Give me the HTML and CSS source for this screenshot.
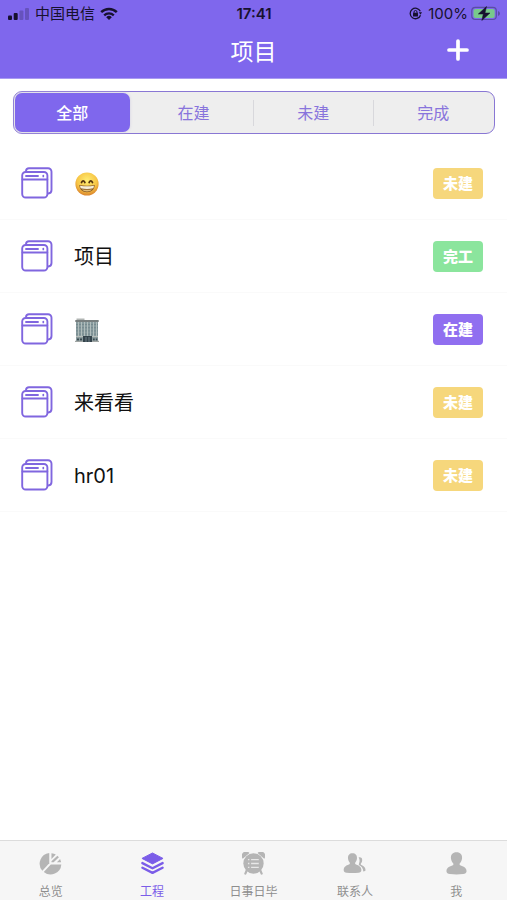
FILE: index.html
```html
<!DOCTYPE html>
<html lang="zh-CN">
<head>
<meta charset="utf-8">
<meta name="viewport" content="width=device-width, initial-scale=1">
<title>项目</title>
<link rel="stylesheet" href="styles.css">
</head>
<body>
<svg class="defs" aria-hidden="true">
  <symbol id="windows" viewBox="0 0 32 32">
    <g fill="none" stroke="currentColor" stroke-width="1.900" stroke-linejoin="round" stroke-linecap="round">
      <path d="M5 4.500V4a3 3 0 0 1 3-2.800h19a3.500 3.500 0 0 1 3.500 3.500V23a3.500 3.500 0 0 1-3.200 3.500"/>
      <rect x="1.200" y="5" width="25.200" height="25.500" rx="3.500"/>
      <path d="M1.500 12.500h24.800"/>
      <path d="M5 9h12" stroke-width="1.900"/>
      <path d="M22.300 8.500v1" stroke-width="1.700"/>
    </g>
  </symbol>
</svg>
<div class="app">
  <header class="header">
    <div class="status">
      <div class="status-left">
        <svg class="signal" viewBox="0 0 22 12" aria-hidden="true">
          <rect x="0" y="7.500" width="4" height="4.500" rx="1"/><rect x="5.700" y="5" width="4" height="7" rx="1"/>
          <rect class="dim" x="11.400" y="2.500" width="4" height="9.500" rx="1"/><rect class="dim" x="17" y="0" width="4" height="12" rx="1"/>
        </svg>
        <span class="carrier">中国电信</span>
        <svg class="wifi" viewBox="0 0 18 13" aria-hidden="true">
          <path d="M1.200 5.200a11.200 11.200 0 0 1 15.600 0" fill="none" stroke="currentColor" stroke-width="2.500"/>
          <path d="M4.200 8.300a7 7 0 0 1 9.600 0" fill="none" stroke="currentColor" stroke-width="2.300"/>
          <path d="M6.200 10.200a4 4 0 0 1 5.600 0L9 13z"/>
        </svg>
      </div>
      <time class="clock">17:41</time>
      <div class="status-right">
        <svg class="lock" viewBox="0 0 13 13" aria-hidden="true">
          <path d="M11.300 4.200A5.300 5.300 0 1 0 11.500 8.200" fill="none" stroke="currentColor" stroke-width="1.300"/>
          <path d="M9.800 5.200h3.200l-1.500 2.500z"/>
          <rect x="4" y="5.800" width="5" height="3.700" rx=".5"/>
          <path d="M5 6V5a1.500 1.500 0 0 1 3 0v1" fill="none" stroke="currentColor"/>
        </svg>
        <span class="percent">100%</span>
        <svg class="battery" viewBox="0 0 29 15" aria-hidden="true">
          <rect x=".8" y="1.300" width="24.500" height="12.200" rx="3.500" fill="none" stroke="#5a4da4" stroke-width="1.200"/>
          <rect x="2.500" y="3" width="21.200" height="8.900" rx="2" fill="#78c98b"/>
          <path d="M27 5v5q2-.6 2-2.500T27 5z" fill="#5a4da4"/>
          <path d="M15.500.5 7.300 8h5l-1.500 6.500L19 7h-5z" stroke="currentColor" stroke-width=".5"/>
        </svg>
      </div>
    </div>
    <div class="titlebar">
      <h1>项目</h1>
      <button class="add" type="button" aria-label="新建项目">
        <svg viewBox="0 0 22 22" aria-hidden="true"><path d="M11 2v18M2 11h18" stroke="currentColor" stroke-width="3.700" stroke-linecap="round"/></svg>
      </button>
    </div>
  </header>
  <main>
    <div class="segments">
      <button class="segment selected" type="button">全部</button>
      <button class="segment" type="button">在建</button>
      <button class="segment divided" type="button">未建</button>
      <button class="segment divided" type="button">完成</button>
    </div>
    <ul class="projects">
      <li>
        <svg class="project-icon" aria-hidden="true"><use href="#windows"/></svg>
        <span class="name">
          <svg class="emoji" viewBox="0 0 24 24" role="img" aria-label="笑脸">
            <defs><radialGradient id="face" cx=".5" cy=".35" r=".65"><stop offset="0" stop-color="#ffed72"/><stop offset=".65" stop-color="#f7c545"/><stop offset="1" stop-color="#d9822c"/></radialGradient></defs>
            <circle cx="12" cy="12" r="11.600" fill="url(#face)"/>
            <path d="M6.500 10.500q1.700-3.400 3.400 0M14.100 10.500q1.700-3.400 3.400 0" fill="none" stroke="#55330f" stroke-width="1.700" stroke-linecap="round"/>
            <path d="M4.200 13q7.800 1.600 15.600 0-.5 7.300-7.800 7.300T4.200 13z" fill="#8a5a25"/>
            <path d="M5 13.700q7 1.300 14 0l-.6 2.600q-6.400 1.400-12.800 0z" fill="#f7efd8"/>
            <path d="M6.800 17.300q5.200 1 10.400 0-1.700 2.200-5.200 2.200t-5.200-2.200z" fill="#e0bd78"/>
          </svg>
        </span>
        <span class="tag pending">未建</span>
      </li>
      <li>
        <svg class="project-icon" aria-hidden="true"><use href="#windows"/></svg>
        <span class="name">项目</span>
        <span class="tag done">完工</span>
      </li>
      <li>
        <svg class="project-icon" aria-hidden="true"><use href="#windows"/></svg>
        <span class="name">
          <svg class="emoji" viewBox="0 0 24 24" role="img" aria-label="办公楼">
            <path d="M1.500.5h8v2h-8z" fill="#b1b5b3"/>
            <path d="M.3 2h23.400v2H.3z" fill="#777e7e"/>
            <path d="M1 4h22v19H1z" fill="#889b9e"/>
            <path d="M1 6.500h22M1 9.700h22M1 12.900h22M1 16.100h22M1 19.300h22" stroke="#6f8286" stroke-width=".7"/>
            <path d="M3.500 4v15M6.500 4v15M9.500 4v15M12.500 4v15M15.500 4v15M18.500 4v15M21.500 4v15" stroke="#b0bdbc"/>
            <path d="M1 18h22v1.300H1z" fill="#b6bdba"/>
            <path d="M8 18h9v6H8z" fill="#34434b"/>
            <path d="M11 19v5M14 19v5" stroke="#8799a1" stroke-width=".7"/>
            <path d="M2 20.500h2v2H2zM5 20.500h2v2H5zM18 20.500h1.700v2H18zM20.800 20.500h1.500v2h-1.500z" fill="#3c4b50"/>
            <path d="M0 22.800h8v1.200H0zM17 22.800h7v1.200h-7z" fill="#a0a5a3"/>
          </svg>
        </span>
        <span class="tag active">在建</span>
      </li>
      <li>
        <svg class="project-icon" aria-hidden="true"><use href="#windows"/></svg>
        <span class="name">来看看</span>
        <span class="tag pending">未建</span>
      </li>
      <li>
        <svg class="project-icon" aria-hidden="true"><use href="#windows"/></svg>
        <span class="name">hr01</span>
        <span class="tag pending">未建</span>
      </li>
    </ul>
  </main>
  <nav class="tabbar">
    <a href="#overview">
      <svg viewBox="0 0 24 24" aria-hidden="true">
        <path d="M10.700 1v10.800L3.500 19.500A11.200 11.200 0 0 1 10.700 1z"/>
        <path d="M12.300 13h11A11.200 11.200 0 0 1 5 20.800z"/>
        <path d="M13 1.300q3 .2 4.500 1.300L13 7.200zM19.200 3.800l1.600 1.600-5.500 5.200H13V9.700zM22 7.200l1.100 3.400h-4.400z"/>
      </svg>
      <span>总览</span>
    </a>
    <a class="current" href="#projects" aria-current="page">
      <svg viewBox="0 0 24 24" aria-hidden="true">
        <path d="M12 1 23 6.700 12 12.400 1 6.700z" stroke="currentColor" stroke-linejoin="round"/>
        <path d="m1.500 11.600 10.500 5.300 10.500-5.300M1.500 16.400 12 21.800l10.500-5.400" fill="none" stroke="currentColor" stroke-width="2.500" stroke-linecap="round" stroke-linejoin="round"/>
      </svg>
      <span>工程</span>
    </a>
    <a href="#daily">
      <svg viewBox="0 0 24 24" aria-hidden="true">
        <path d="M.8 7A4.500 4.500 0 0 1 7.800 1zM23.200 7a4.500 4.500 0 0 0-7-6z"/>
        <circle cx="12" cy="12" r="10.600"/>
        <path d="m5 19-1.500 3.500M19 19l1.500 3.500" stroke="currentColor" stroke-width="2.300" stroke-linecap="round"/>
        <path d="M9.500 8h8M9.500 12h8M9.500 16h8M6.200 8h1.500M6.200 12h1.500M6.200 16h1.500" stroke="#e8e8e8" stroke-width="1.400"/>
      </svg>
      <span>日事日毕</span>
    </a>
    <a href="#contacts">
      <svg viewBox="0 0 24 24" aria-hidden="true">
        <path d="M9.800 1.200c3.200 0 5 2.100 4.800 5.200-.1 2-.9 3.600-1.900 4.700v1.400c2.500 1.300 6.500 2 6.500 6.300 0 2-1.300 2.700-3 2.900-4 .4-8.500.4-12.500 0-1.700-.2-3-.9-3-2.900 0-4.300 4-5 6.400-6.300v-1.400c-1-1.100-1.800-2.700-1.900-4.700-.2-3.100 1.600-5.200 4.600-5.200z"/>
        <path d="M16.300 5.500c2.600-.4 4 .8 3.700 3.300-.1 1.500-.7 2.600-1.400 3.300v1.200c2 1 4.900 2.200 4.900 5.600 0 1-.8 1.500-2.300 1.500-.1-3.900-2.200-5.600-4.700-6.900 0-2 1.200-3 .7-5.400-.2-1-.4-1.800-.9-2.600z"/>
      </svg>
      <span>联系人</span>
    </a>
    <a href="#me">
      <svg viewBox="0 0 24 24" aria-hidden="true">
        <path d="M12 .2c4 0 6.100 2.500 5.800 6.200-.2 2.300-1.200 4.300-2.500 5.600v1.500c3 1.300 7.200 2.100 7.200 6.600 0 1.800-1.500 2.500-3.500 2.800-4.600.6-9.400.6-14 0-2-.3-3.500-1-3.500-2.800 0-4.500 4.200-5.300 7.200-6.600V12c-1.300-1.300-2.300-3.300-2.500-5.600C5.900 2.700 8 .2 12 .2z"/>
      </svg>
      <span>我</span>
    </a>
  </nav>
</div>
</body>
</html>
```
FILE: styles.css
```css
* { box-sizing: border-box; }

body {
  margin: 0;
  background: #fff;
  font-family: Inter, "Noto Sans CJK SC", sans-serif;
}

svg { display: block; fill: currentColor; flex: none; }
.defs { width: 0; height: 0; position: absolute; }
button { border: 0; padding: 0; font-family: inherit; cursor: pointer; }

.app {
  min-height: 100vh;
  display: flex;
  flex-direction: column;
}

.header {
  background: #7f67ed;
  color: #fff;
  padding-bottom: 1px;
  border-bottom: 1px solid #a99af2;
}

.status {
  display: grid;
  grid-template-columns: 1fr auto 1fr;
  align-items: center;
  height: 27px;
  padding: 0 7px 0 8px;
  color: #17112f;
  font-size: 15px;
  line-height: 20px;
}
.status-left, .status-right { display: flex; align-items: center; }
.status-left { gap: 5px; }
.status-right { justify-content: flex-end; gap: 6px; }
.status-right .battery { margin-left: -3px; }
.signal { width: 22px; height: 12px; }
.signal .dim { fill: #6652bd; }
.wifi { width: 18px; height: 13px; }
.clock { font-weight: 600; }
.lock { width: 13px; height: 13px; }
.battery { width: 29px; height: 15px; }

.titlebar {
  display: grid;
  grid-template-columns: 1fr auto 1fr;
  align-items: center;
  height: 50px;
  padding: 0 38px;
}
.titlebar h1 {
  grid-column: 2;
  margin: 0;
  font-size: 23px;
  line-height: 32px;
  font-weight: 400;
}
.add {
  justify-self: end;
  width: 22px;
  height: 22px;
  margin-bottom: 4px;
  background: none;
  color: #fff;
}

main { flex: 1; }

.segments {
  display: flex;
  height: 43px;
  margin: 12px 12px 13px 13px;
  padding: 1px;
  border: 1px solid #8977d4;
  border-radius: 9px;
  background: #eee;
}
.segment {
  flex: 1;
  background: linear-gradient(#d8d8dc, #d8d8dc) left center / 0 26px no-repeat;
  color: #8874dc;
  font-size: 16px;
  line-height: 24px;
}
.segment.divided { background-size: 1px 26px; }
.segment.selected {
  flex: 0 0 24%;
  margin-right: 4px;
  border-radius: 7px;
  background: #7f67ed;
  color: #fff;
  font-weight: 500;
  box-shadow: 0 0 3px #d0cce0;
}

.projects { list-style: none; margin: 0; padding: 0; }
.projects li {
  display: flex;
  align-items: center;
  height: 73px;
  padding: 0 24px 0 21px;
  border-bottom: 1px solid #fafafa;
}
.project-icon { width: 32px; height: 32px; color: #8066df; }
.name {
  flex: 1;
  margin-left: 21px;
  padding-top: 2px;
  color: #111;
  font-size: 20px;
  line-height: 28px;
}
.emoji { width: 24px; height: 24px; margin: 0 1px; }
.tag {
  width: 50px;
  border-radius: 4px;
  color: #fff;
  font-size: 15px;
  font-weight: 900;
  line-height: 31px;
  text-align: center;
}
.pending { background: #f6d77c; }
.done { background: #8be59d; }
.active { background: #906ff0; }

.tabbar {
  display: flex;
  height: 60px;
  border-top: 1px solid #dcdcdc;
  background: #f6f6f6;
}
.tabbar a {
  flex: 1;
  display: flex;
  flex-direction: column;
  align-items: center;
  gap: 9px;
  padding-top: 11px;
  color: #b5b5b5;
  text-decoration: none;
  font-size: 12px;
  line-height: 16px;
}
.tabbar svg { width: 23px; height: 23px; }
.tabbar span { color: #8e8e8e; }
.tabbar .current, .tabbar .current span { color: #7b5de8; }
```
